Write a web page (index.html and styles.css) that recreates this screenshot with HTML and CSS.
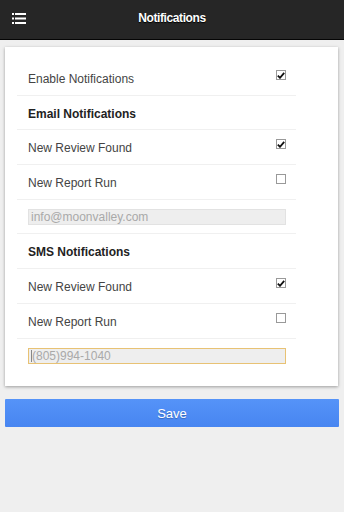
FILE: index.html
```html
<!DOCTYPE html>
<html>
<head>
<meta charset="utf-8">
<link rel="stylesheet" href="styles.css">
</head>
<body>
<header class="topbar">
  <span class="menu-icon">
    <svg width="14" height="11" viewBox="0 0 14 11">
      <rect x="0" y="0" width="2" height="2" fill="#fff"/>
      <rect x="3" y="0" width="11" height="2" fill="#fff"/>
      <rect x="0" y="4.5" width="2" height="2" fill="#fff"/>
      <rect x="3" y="4.5" width="11" height="2" fill="#fff"/>
      <rect x="0" y="9" width="2" height="2" fill="#fff"/>
      <rect x="3" y="9" width="11" height="2" fill="#fff"/>
    </svg>
  </span>
  <h1 class="title">Notifications</h1>
</header>
<main class="content">
  <section class="card">
    <ul class="list">
      <li class="row"><span class="label">Enable Notifications</span><span class="box checked"><svg width="8" height="7" viewBox="0 0 8 7"><path d="M0.8 3.6 L3 5.8 L7.2 0.8" fill="none" stroke="#111" stroke-width="1.8"/></svg></span></li>
      <li class="row"><span class="label heading">Email Notifications</span></li>
      <li class="row"><span class="label">New Review Found</span><span class="box checked"><svg width="8" height="7" viewBox="0 0 8 7"><path d="M0.8 3.6 L3 5.8 L7.2 0.8" fill="none" stroke="#111" stroke-width="1.8"/></svg></span></li>
      <li class="row"><span class="label">New Report Run</span><span class="box"></span></li>
      <li class="row field-row"><input class="field" type="text" placeholder="info@moonvalley.com"></li>
      <li class="row"><span class="label heading">SMS Notifications</span></li>
      <li class="row"><span class="label">New Review Found</span><span class="box checked"><svg width="8" height="7" viewBox="0 0 8 7"><path d="M0.8 3.6 L3 5.8 L7.2 0.8" fill="none" stroke="#111" stroke-width="1.8"/></svg></span></li>
      <li class="row"><span class="label">New Report Run</span><span class="box"></span></li>
      <li class="row field-row last"><span class="field focus"><span class="caret"></span><span class="ph">(805)994-1040</span></span></li>
    </ul>
  </section>
  <button class="save">Save</button>
</main>
</body>
</html>
```
FILE: styles.css
```css
* { box-sizing: border-box; }
html, body { margin: 0; padding: 0; }
body {
  width: 344px;
  height: 512px;
  background: #efefef;
  font-family: "Liberation Sans", Arial, sans-serif;
  font-size: 12px;
  color: #444;
  overflow: hidden;
}
.topbar {
  height: 40px;
  background: #262626;
  border-bottom: 1px solid #050505;
  display: flex;
  align-items: center;
  justify-content: center;
  position: relative;
}
.menu-icon {
  position: absolute;
  left: 12px;
  top: 13px;
  width: 14px;
  height: 11px;
  display: block;
  line-height: 0;
}
.title {
  margin: 0 0 3px 0;
  font-size: 12px;
  font-weight: bold;
  letter-spacing: -0.4px;
  color: #fff;
  text-shadow: 0 1px 1px #000;
}
.content {
  padding: 7px 5px 0 5px;
  display: flex;
  flex-direction: column;
}
.card {
  background: #fff;
  width: 333px;
  padding: 14px 42px 13px 12px;
  box-shadow: 0 1px 3px rgba(0,0,0,0.35);
}
.list {
  list-style: none;
  margin: 0;
  padding: 0;
}
.row {
  height: 34.7px;
  border-bottom: 1px solid #f0f0f0;
  display: flex;
  align-items: center;
  justify-content: space-between;
  padding: 0 10px 0 11px;
  position: relative;
}
.row.last { border-bottom: none; }
.label { line-height: 16px; margin-top: 2px; }
.heading { font-weight: bold; color: #222; }
.box {
  width: 10px;
  height: 10px;
  border: 1px solid #999;
  background: #fff;
  align-self: flex-start;
  margin-top: 9px;
  display: flex;
  align-items: center;
  justify-content: center;
  line-height: 0;
}
.field-row { padding-right: 10px; }
.field {
  width: 258px;
  height: 16px;
  border: 1px solid #e2e2e2;
  background: #eeeeee;
  font-family: "Liberation Sans", Arial, sans-serif;
  font-size: 12px;
  padding: 0 2px;
  color: #999;
  outline: none;
  margin: 0;
  display: flex;
  align-items: center;
  line-height: 14px;
}
.field::placeholder { color: #a9a9a9; }
.field.focus { border-color: #e8c274; }
.caret {
  width: 1px;
  height: 12px;
  background: #888;
  margin-right: 0;
}
.ph { color: #a9a9a9; }
.save {
  margin-top: 13px;
  width: 334px;
  height: 28px;
  border: none;
  border-radius: 1px;
  background: linear-gradient(#5593f8, #4785f1);
  color: #fff;
  font-family: "Liberation Sans", Arial, sans-serif;
  font-size: 13px;
  text-shadow: 0 1px 1px rgba(0,0,0,0.25);
  padding: 0;
}
```
